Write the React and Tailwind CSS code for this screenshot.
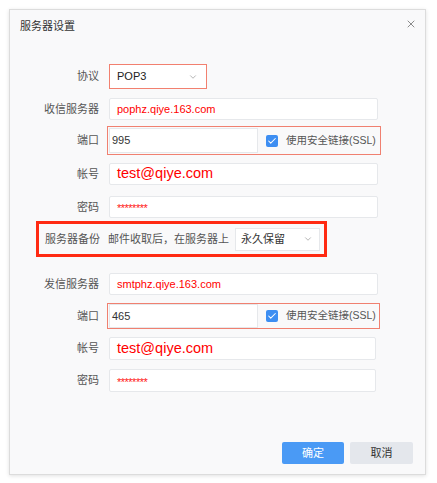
import { ChevronDown, X, Check } from "lucide-react";

const FONT = { fontFamily: '"Liberation Sans", "Noto Sans CJK SC", sans-serif' };

const Label = ({ children }) => (
  <div className="w-[89px] shrink-0 text-right text-[11px] text-[#555] whitespace-nowrap">{children}</div>
);

const TextInput = ({ value, className = "", big }) => (
  <div
    className={`flex items-center bg-white border border-[#e6e8eb] rounded-[2px] pl-[7px] ${className}`}
  >
    <span className={big ? "text-[14.5px] text-[#ff0000]" : "text-[11px] text-[#ff0000]"}>{value}</span>
  </div>
);

const Password = ({ className = "" }) => (
  <div className={`flex items-center bg-white border border-[#e6e8eb] rounded-[2px] pl-[7px] ${className}`}>
    <span className="text-[11px] leading-none text-[#ff2020] tracking-[-0.5px] pt-[3px]">********</span>
  </div>
);

const SslRow = ({ port, boxClass, inputClass }) => (
  <div className="flex items-center">
    <Label>端口</Label>
    <div className={`ml-[8px] flex items-center border border-[#f08070] whitespace-nowrap ${boxClass}`}>
      <div className={`shrink-0 flex items-center bg-white border border-[#e6e8eb] pl-[2px] text-[11px] text-[#333] ${inputClass}`}>
        {port}
      </div>
      <div className="shrink-0 ml-[8px] w-[12px] h-[12px] rounded-[2px] bg-[#3d8ef2] flex items-center justify-center">
        <Check size={10} strokeWidth={2.5} color="#fff" />
      </div>
      <span className="ml-[8px] text-[10.5px] text-[#555] whitespace-nowrap">使用安全链接(SSL)</span>
    </div>
  </div>
);

export default function App() {
  return (
    <div style={FONT} className="w-[437px] h-[483px] bg-white pt-[9px] pl-[9px]">
      <div className="w-[417px] h-[466px] border border-[#dcdcdc] bg-[#f9f9fa] shadow-[0_1px_4px_rgba(0,0,0,0.12)] flex flex-col">
        {/* header */}
        <div className="h-[33px] flex items-center justify-between pl-[10px] pr-[8px]">
          <span className="text-[11px] text-[#333]">服务器设置</span>
          <X size={12} strokeWidth={1.5} color="#666" className="-mt-[6px]" />
        </div>

        <div className="flex flex-col">
          {/* protocol */}
          <div className="mt-[21px] flex items-center">
            <Label>协议</Label>
            <div className="ml-[10px] w-[98px] h-[25px] bg-white border-[1.5px] border-[#f2806f] flex items-center justify-between pl-[7px] pr-[8px]">
              <span className="text-[11px] text-[#222]">POP3</span>
              <ChevronDown size={10} strokeWidth={1.5} color="#888" />
            </div>
          </div>

          <div className="mt-[9px] flex items-center">
            <Label>收信服务器</Label>
            <TextInput value="pophz.qiye.163.com" className="ml-[10px] w-[269px] h-[22px]" />
          </div>

          <div className="mt-[6px]">
            <SslRow port="995" boxClass="w-[274px] h-[29px] pl-[1px]" inputClass="w-[149px] h-[25px]" />
          </div>

          <div className="mt-[8px] flex items-center">
            <Label>帐号</Label>
            <TextInput big value="test@qiye.com" className="ml-[10px] w-[269px] h-[22px]" />
          </div>

          <div className="mt-[11px] flex items-center">
            <Label>密码</Label>
            <Password className="ml-[10px] w-[269px] h-[22px]" />
          </div>

          {/* backup */}
          <div className="mt-[3px] ml-[26px] w-[291px] h-[36px] border-[3px] border-[#ff2a12] flex items-center pl-[6px] whitespace-nowrap">
            <span className="shrink-0 text-[11px] text-[#555]">服务器备份</span>
            <span className="ml-[8px] text-[11px] text-[#555]">邮件收取后，在服务器上</span>
            <div className="shrink-0 ml-[6px] w-[85px] h-[23px] bg-white border border-[#e6e8eb] flex items-center justify-between pl-[5px] pr-[6px]">
              <span className="text-[11px] text-[#333]">永久保留</span>
              <ChevronDown size={10} strokeWidth={1.5} color="#888" />
            </div>
          </div>

          <div className="mt-[16px] flex items-center">
            <Label>发信服务器</Label>
            <TextInput value="smtphz.qiye.163.com" className="ml-[10px] w-[269px] h-[22px]" />
          </div>

          <div className="mt-[8px]">
            <SslRow port="465" boxClass="w-[273px] h-[26px] pl-[1px]" inputClass="w-[149px] h-[24px]" />
          </div>

          <div className="mt-[8px] flex items-center">
            <Label>帐号</Label>
            <TextInput big value="test@qiye.com" className="ml-[10px] w-[267px] h-[23px]" />
          </div>

          <div className="mt-[9px] flex items-center">
            <Label>密码</Label>
            <Password className="ml-[10px] w-[267px] h-[23px]" />
          </div>
        </div>

        {/* footer */}
        <div className="mt-[50px] flex justify-end gap-[6px] pr-[12px]">
          <button className="w-[62px] h-[22px] rounded-[2px] bg-[#4a9af5] text-white text-[11px]">确定</button>
          <button className="w-[63px] h-[22px] rounded-[2px] bg-[#e4e7ec] text-[#333] text-[11px]">取消</button>
        </div>
      </div>
    </div>
  );
}
